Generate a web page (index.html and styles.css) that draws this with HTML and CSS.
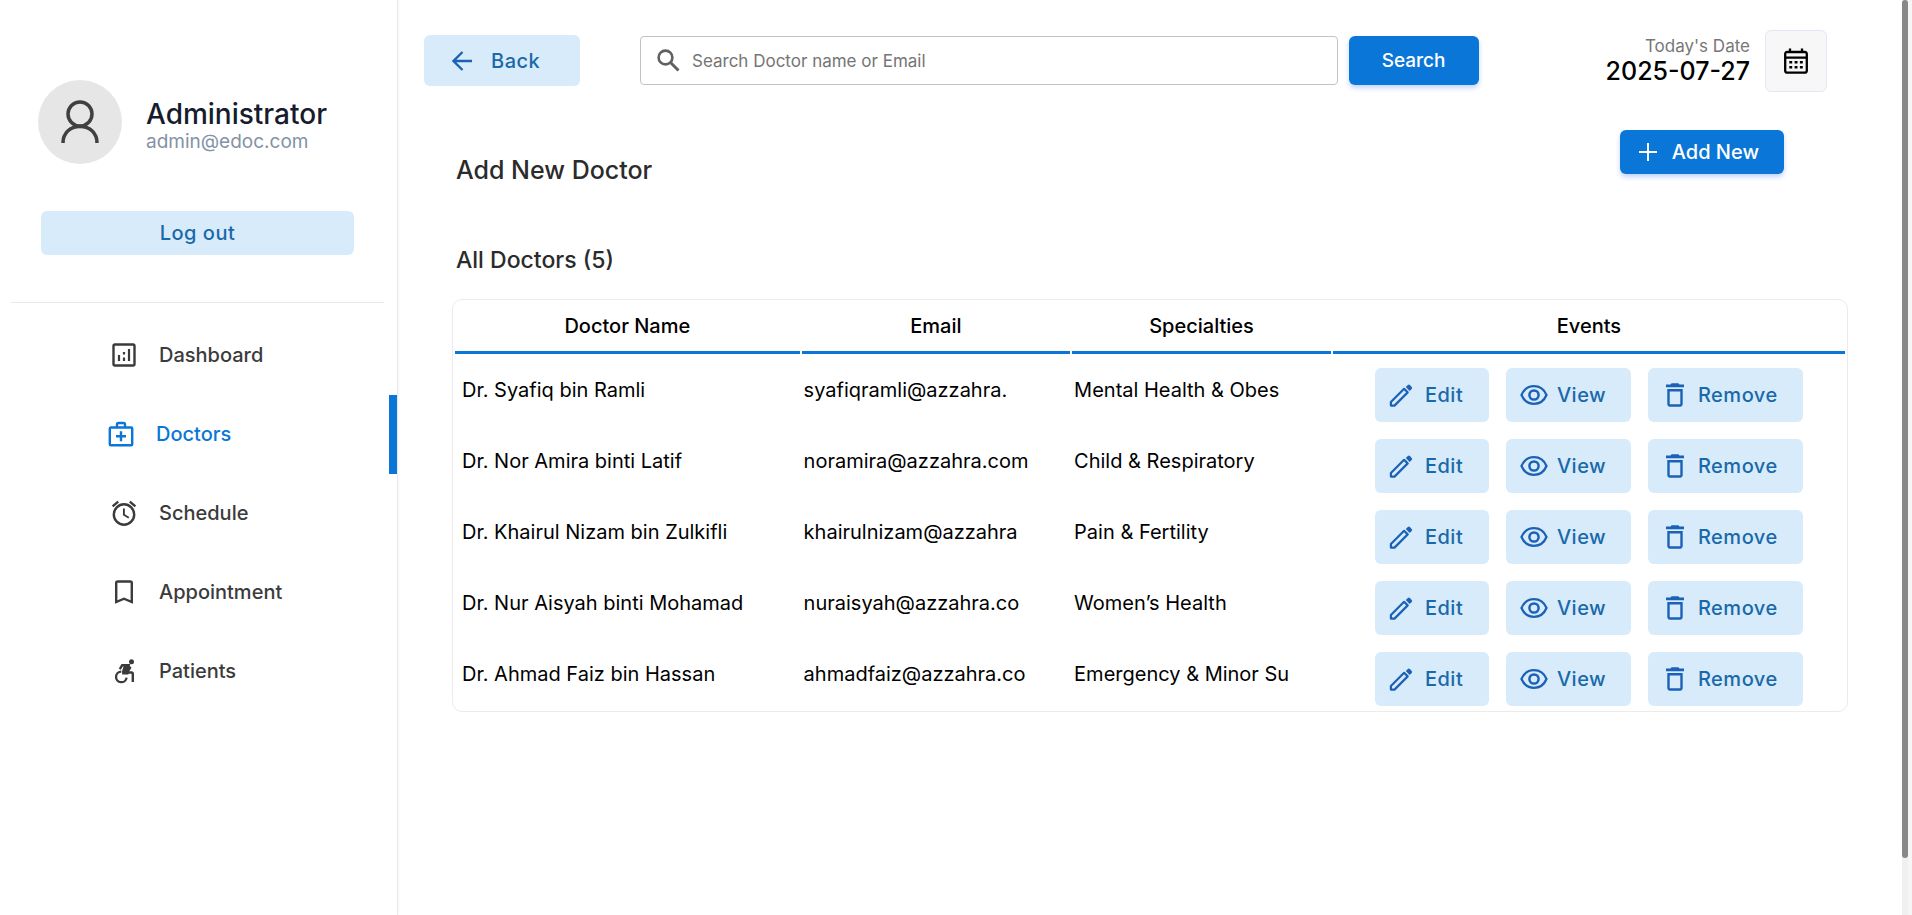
FILE: index.html
```html
<!DOCTYPE html>
<html lang="en">
<head>
<meta charset="utf-8">
<meta name="viewport" content="width=device-width, initial-scale=1">
<title>Doctors</title>
<link rel="stylesheet" href="styles.css">
</head>
<body>
<svg class="sprite" aria-hidden="true">
  <symbol id="i-edit" viewBox="0 0 24 24"><path d="M1.400 22.600v-3.600L14.600 5.800l3.600 3.600L5 22.600z" fill="none" stroke="currentColor" stroke-width="2.200" stroke-linejoin="round"/><path d="M16.300 4.100l2-2a1.500 1.500 0 0 1 2.100 0l1.800 1.800a1.500 1.500 0 0 1 0 2.100l-2 2z" fill="currentColor"/></symbol>
  <symbol id="i-view" viewBox="0 0 28 22"><path d="M1.500 11C3.800 5.500 8.500 2.200 14 2.200S24.200 5.500 26.500 11C24.200 16.500 19.500 19.800 14 19.800S3.800 16.500 1.500 11z" fill="none" stroke="currentColor" stroke-width="2.300"/><circle cx="14" cy="11" r="4.600" fill="none" stroke="currentColor" stroke-width="2.500"/></symbol>
  <symbol id="i-trash" viewBox="0 0 20 24"><path d="M1 1.600h4.500L6.600.300h6.800l1.100 1.300H19v2.600H1z" fill="currentColor"/><path d="M3.500 7.200h13v13.900a1.400 1.400 0 0 1-1.400 1.400H4.900a1.400 1.400 0 0 1-1.400-1.400z" fill="none" stroke="currentColor" stroke-width="2.400"/></symbol>
</svg>

<aside class="sidebar">
  <div class="profile">
    <svg class="avatar" viewBox="0 0 84 84" aria-hidden="true"><circle cx="42" cy="42" r="42" fill="#e6e6e6"/><g fill="none" stroke="#404040" stroke-width="3.500"><circle cx="42" cy="34" r="12"/><path d="M25 63C25 53 32 46.500 42 46.500S59 53 59 63"/></g></svg>
    <div class="profile-text">
      <p class="profile-name">Administrator</p>
      <p class="profile-mail">admin@edoc.com</p>
    </div>
  </div>
  <button class="btn btn-soft logout" type="button">Log out</button>
  <hr class="divider">
  <nav class="menu">
    <a class="menu-item" href="#"><svg viewBox="0 0 26 26" aria-hidden="true"><rect x="2.500" y="2.500" width="21" height="21" rx="1.500" fill="none" stroke="currentColor" stroke-width="2.400"/><path d="M8 13v6M13 10v2.500M13 15.500v3.500M18 7v12" fill="none" stroke="currentColor" stroke-width="2.200"/></svg>Dashboard</a>
    <a class="menu-item active" href="#"><svg viewBox="0 0 26 26" aria-hidden="true"><path d="M2.800 6.500h20.400a1 1 0 0 1 1 1v15.700a1 1 0 0 1-1 1H2.800a1 1 0 0 1-1-1V7.500a1 1 0 0 1 1-1zM9 6.500v-3a1.500 1.500 0 0 1 1.500-1.500h5A1.500 1.500 0 0 1 17 3.500v3M13 10.200v10M8 15.200h10" fill="none" stroke="currentColor" stroke-width="2.400"/></svg>Doctors</a>
    <a class="menu-item" href="#"><svg viewBox="0 0 26 26" aria-hidden="true"><g fill="none" stroke="currentColor" stroke-width="2.400"><circle cx="13" cy="14.500" r="10.200"/><path d="M1.600 6.300l5.600-4.700M24.400 6.300l-5.600-4.700"/><path d="M12.900 8.500v6.300l4.900 3" stroke-width="1.900"/></g></svg>Schedule</a>
    <a class="menu-item" href="#"><svg viewBox="0 0 26 26" aria-hidden="true"><path d="M5.200 23V4a1.500 1.500 0 0 1 1.500-1.500h12.600A1.500 1.500 0 0 1 20.800 4v19L13 19.700z" fill="none" stroke="currentColor" stroke-width="2.400"/></svg>Appointment</a>
    <a class="menu-item" href="#"><svg viewBox="0 0 26 26" aria-hidden="true"><circle cx="20.500" cy="3.800" r="2.500" fill="currentColor"/><path d="M8.800 11.200L11.200 7.200H17.500L13.800 14.500H20.500a1.300 1.300 0 0 1 1.300 1.300V24" fill="none" stroke="currentColor" stroke-width="2.400"/><path d="M13 7l5.500.500 2 2.300-3 4.700v2h-6.300l-.200-3z" fill="currentColor"/><path d="M10.300 13.600a5.300 5.300 0 1 0 5.300 6" fill="none" stroke="currentColor" stroke-width="2.300"/></svg>Patients</a>
  </nav>
</aside>

<main class="main">
  <header class="topbar">
    <button class="btn btn-soft back" type="button"><svg width="20" height="20" viewBox="0 0 20 20" aria-hidden="true"><path d="M10.500 1L1.500 10l9 9M1.500 10H20" fill="none" stroke="#1b62b7" stroke-width="2.300"/></svg>Back</button>
    <form class="search">
      <div class="field">
        <svg width="23" height="23" viewBox="0 0 23 23" aria-hidden="true"><circle cx="8.500" cy="8.500" r="6.900" fill="none" stroke="#606060" stroke-width="2.600"/><path d="M13.500 13.500l8 8" stroke="#606060" stroke-width="3"/></svg>
        <input type="search" aria-label="Search doctors" placeholder="Search Doctor name or Email">
      </div>
      <button class="btn btn-primary search-btn" type="submit">Search</button>
    </form>
    <div class="today">
      <p class="today-label">Today's Date</p>
      <p class="today-date">2025-07-27</p>
    </div>
    <button class="calendar" type="button" aria-label="Calendar"><svg width="24" height="26" viewBox="0 0 24 26" aria-hidden="true"><path d="M3 4h18a1.800 1.800 0 0 1 1.800 1.800v17A1.800 1.800 0 0 1 21 24.600H3a1.800 1.800 0 0 1-1.800-1.800v-17A1.800 1.800 0 0 1 3 4zM1.200 9.600h21.600M6 .500V4M18 .500V4" fill="none" stroke="#000" stroke-width="2.300"/><path d="M5.300 14.200H19M5.300 19.200H19" fill="none" stroke="#000" stroke-width="2.600" stroke-dasharray="2.900 2.400"/></svg></button>
  </header>

  <div class="title-row">
    <h1 class="heading">Add New Doctor</h1>
    <button class="btn btn-primary add" type="button"><svg width="18" height="18" viewBox="0 0 18 18" aria-hidden="true"><path d="M9 0v18M0 9h18" stroke="#fff" stroke-width="2"/></svg>Add New</button>
  </div>
  <h2 class="heading subheading">All Doctors (5)</h2>

  <table class="doctors">
    <thead><tr><th class="col-name">Doctor Name</th><th class="col-mail">Email</th><th class="col-spec">Specialties</th><th>Events</th></tr></thead>
    <tbody>
      <tr><td>Dr. Syafiq bin Ramli</td><td>syafiqramli@azzahra.</td><td>Mental Health &amp; Obes</td><td><div class="actions"><button class="btn btn-soft edit" type="button"><svg><use href="#i-edit"/></svg>Edit</button><button class="btn btn-soft view" type="button"><svg><use href="#i-view"/></svg>View</button><button class="btn btn-soft remove" type="button"><svg><use href="#i-trash"/></svg>Remove</button></div></td></tr>
      <tr><td>Dr. Nor Amira binti Latif</td><td>noramira@azzahra.com</td><td>Child &amp; Respiratory</td><td><div class="actions"><button class="btn btn-soft edit" type="button"><svg><use href="#i-edit"/></svg>Edit</button><button class="btn btn-soft view" type="button"><svg><use href="#i-view"/></svg>View</button><button class="btn btn-soft remove" type="button"><svg><use href="#i-trash"/></svg>Remove</button></div></td></tr>
      <tr><td>Dr. Khairul Nizam bin Zulkifli</td><td>khairulnizam@azzahra</td><td>Pain &amp; Fertility</td><td><div class="actions"><button class="btn btn-soft edit" type="button"><svg><use href="#i-edit"/></svg>Edit</button><button class="btn btn-soft view" type="button"><svg><use href="#i-view"/></svg>View</button><button class="btn btn-soft remove" type="button"><svg><use href="#i-trash"/></svg>Remove</button></div></td></tr>
      <tr><td>Dr. Nur Aisyah binti Mohamad</td><td>nuraisyah@azzahra.co</td><td>Women’s Health</td><td><div class="actions"><button class="btn btn-soft edit" type="button"><svg><use href="#i-edit"/></svg>Edit</button><button class="btn btn-soft view" type="button"><svg><use href="#i-view"/></svg>View</button><button class="btn btn-soft remove" type="button"><svg><use href="#i-trash"/></svg>Remove</button></div></td></tr>
      <tr><td>Dr. Ahmad Faiz bin Hassan</td><td>ahmadfaiz@azzahra.co</td><td>Emergency &amp; Minor Su</td><td><div class="actions"><button class="btn btn-soft edit" type="button"><svg><use href="#i-edit"/></svg>Edit</button><button class="btn btn-soft view" type="button"><svg><use href="#i-view"/></svg>View</button><button class="btn btn-soft remove" type="button"><svg><use href="#i-trash"/></svg>Remove</button></div></td></tr>
    </tbody>
  </table>
</main>
<div class="scroll-track" aria-hidden="true"><div class="scroll-thumb"></div></div>
</body>
</html>
```
FILE: styles.css
```css
* { box-sizing: border-box; }
body {
  margin: 0;
  min-height: 100vh;
  display: flex;
  background: #fff;
  color: #000;
  font-family: Inter, "Noto Sans", sans-serif;
  font-size: 20px;
}
p, h1, h2 { margin: 0; font-weight: 500; }
.sprite { display: none; }
.btn {
  display: flex;
  align-items: center;
  border: 0;
  border-radius: 6px;
  font: inherit;
  font-weight: 500;
  line-height: 24px;
  cursor: pointer;
}
.btn-soft { background: #d8ebfa; color: #1969aa; letter-spacing: 0.5px; }
.btn-soft svg { color: #1b62b7; flex: none; }
.btn-primary { background: #0a76d8; color: #fff; box-shadow: 0 3px 5px rgba(57, 108, 240, 0.3); }

/* Sidebar */
.sidebar {
  flex: 0 0 398px;
  border-right: 1px solid #e8e8e8;
  box-shadow: 2px 0 2px #fafafa;
}
.profile {
  display: flex;
  align-items: center;
  gap: 24px;
  padding: 80px 38px 0;
}
.avatar { width: 84px; height: 84px; }
.profile-text { padding-top: 8px; }
.profile-name { color: #161c2d; font-size: 28px; line-height: 32px; }
.profile-mail { color: #8492a6; font-size: 19px; font-weight: 400; line-height: 24px; }
.logout {
  width: 313px;
  height: 44px;
  margin: 47px 0 0 41px;
  justify-content: center;
}
.divider { margin: 47px 13px 13px 11px; border: 0; border-top: 1px solid #e8e8e8; }
.menu-item {
  display: flex;
  align-items: center;
  gap: 22px;
  height: 79px;
  padding: 0 0 2px 111px;
  color: #3b3b3b;
  font-weight: 500;
  text-decoration: none;
}
.menu-item svg { width: 26px; height: 26px; }
.menu-item.active { padding-left: 108px; color: #0a76d8; border-right: 8px solid #0a76d8; }

/* Main area */
.main { flex: 1; min-width: 0; padding: 30px 54px 0 26px; }
.topbar { display: flex; align-items: center; padding-right: 21px; }
.back { width: 156px; height: 51px; margin-bottom: 1px; padding: 0 28px; gap: 19px; }
.search { flex: 1; display: flex; gap: 11px; margin: 0 127px 1px 60px; }
.field {
  flex: 1;
  display: flex;
  align-items: center;
  gap: 12px;
  height: 49px;
  padding: 0 16px;
  border: 1px solid #c3c3c3;
  border-radius: 4px;
}
.field svg { flex: none; }
.field input {
  flex: 1;
  min-width: 0;
  padding: 0;
  border: 0;
  outline: 0;
  background: none;
  font: inherit;
  font-size: 17px;
}
.field input::placeholder { color: #757575; }
.search-btn { width: 130px; justify-content: center; font-size: 19px; }
.today { padding-bottom: 2px; text-align: right; }
.today-label { color: #777; font-size: 17px; font-weight: 400; line-height: 22px; }
.today-date { font-size: 25px; line-height: 28px; }
.calendar {
  display: grid;
  place-items: center;
  width: 62px;
  height: 62px;
  margin-left: 15px;
  border: 1px solid #e3e7f5;
  border-radius: 6px;
  background: #f7f7f7;
}
.title-row { display: flex; justify-content: space-between; padding: 38px 64px 0 32px; }
.heading { color: #2b2b2b; font-size: 25px; line-height: 30px; }
.title-row .heading { padding-top: 25px; }
.add { height: 44px; padding: 0 25px 0 19px; gap: 15px; }
.subheading { padding: 60px 0 0 32px; font-size: 23px; }

/* Doctors table */
.doctors {
  width: calc(100% - 28px);
  margin: 24px 0 0 28px;
  table-layout: fixed;
  border: 1px solid #ebebeb;
  border-radius: 10px;
  border-spacing: 2px;
}
.doctors th { height: 52px; padding: 0 0 2px; border-bottom: 3px solid #0a76d8; font-weight: 500; }
.col-name { width: 24.9%; }
.col-mail { width: 19.4%; }
.col-spec { width: 18.7%; }
.doctors td { height: 69px; padding: 0 2px 2px; white-space: nowrap; }
.doctors td:first-child { padding-left: 7px; }
.doctors td:last-child { padding: 12px 0 3px; }
.actions { display: flex; justify-content: center; gap: 17px; }
.actions .btn { height: 54px; padding: 0; }
.actions svg { height: 24px; }
.actions .edit { width: 114px; padding-left: 14px; gap: 11px; }
.actions .view { width: 125px; padding-left: 14px; gap: 9px; }
.actions .remove { width: 155px; padding-left: 17px; gap: 13px; }
.edit svg { width: 25px; }
.view svg { width: 28px; }
.remove svg { width: 20px; }

/* Scroll indicator */
.scroll-track { flex: 0 0 10px; height: 100vh; border-right: 4px solid #f6f6f6; background: #f0f0f0; }
.scroll-thumb { height: calc(100% - 57px); border-radius: 3px; background: #888; }
```
